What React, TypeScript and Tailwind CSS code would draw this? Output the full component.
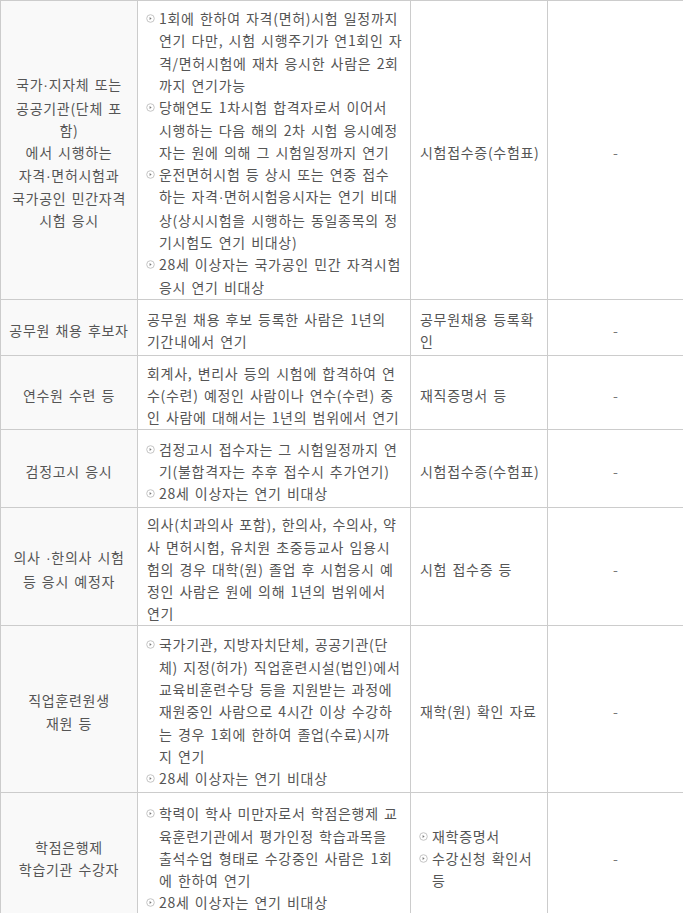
import React from "react";

const Bullet = () => (
  <svg width="9" height="9" viewBox="0 0 9 9" className="shrink-0 mt-[7px] ml-[-1px] mr-[4px]">
    <circle cx="4.5" cy="4.5" r="3.8" fill="#fff" stroke="#c4c4c4" strokeWidth="1" />
    <path d="M3.6 3 L5.6 4.5 L3.6 6 Z" fill="#7a7a7a" />
  </svg>
);

const Txt = ({ s }: { s: string }) => {
  const parts = s.split("·");
  return (
    <>
      {parts.map((p, i) => (
        <React.Fragment key={i}>
          {i > 0 && <span style={{ fontFamily: '"Liberation Sans", sans-serif' }}>·</span>}
          {p}
        </React.Fragment>
      ))}
    </>
  );
};

const Lines = ({ lines }: { lines: string[] }) => (
  <div>
    {lines.map((l, i) => (
      <div key={i} className="whitespace-nowrap">
        <Txt s={l} />
      </div>
    ))}
  </div>
);

const BulletList = ({ items }: { items: string[][] }) => (
  <div>
    {items.map((lines, i) => (
      <div key={i} className="flex">
        <Bullet />
        <Lines lines={lines} />
      </div>
    ))}
  </div>
);

type Row = {
  h: string;
  c1: string[];
  c2: React.ReactNode;
  c3: React.ReactNode;
};

const rows: Row[] = [
  {
    h: "h-[299px]",
    c1: ["국가·지자체 또는", "공공기관(단체 포", "함)", "에서 시행하는", "자격·면허시험과", "국가공인 민간자격", "시험 응시"],
    c2: (
      <BulletList
        items={[
          ["1회에 한하여 자격(면허)시험 일정까지", "연기 다만, 시험 시행주기가 연1회인 자", "격/면허시험에 재차 응시한 사람은 2회", "까지 연기가능"],
          ["당해연도 1차시험 합격자로서 이어서", "시행하는 다음 해의 2차 시험 응시예정", "자는 원에 의해 그 시험일정까지 연기"],
          ["운전면허시험 등 상시 또는 연중 접수", "하는 자격·면허시험응시자는 연기 비대", "상(상시시험을 시행하는 동일종목의 정", "기시험도 연기 비대상)"],
          ["28세 이상자는 국가공인 민간 자격시험", "응시 연기 비대상"],
        ]}
      />
    ),
    c3: <Lines lines={["시험접수증(수험표)"]} />,
  },
  {
    h: "h-[56px]",
    c1: ["공무원 채용 후보자"],
    c2: <Lines lines={["공무원 채용 후보 등록한 사람은 1년의", "기간내에서 연기"]} />,
    c3: <Lines lines={["공무원채용 등록확", "인"]} />,
  },
  {
    h: "h-[74px]",
    c1: ["연수원 수련 등"],
    c2: (
      <Lines
        lines={["회계사, 변리사 등의 시험에 합격하여 연", "수(수련) 예정인 사람이나 연수(수련) 중", "인 사람에 대해서는 1년의 범위에서 연기"]}
      />
    ),
    c3: <Lines lines={["재직증명서 등"]} />,
  },
  {
    h: "h-[78px]",
    c1: ["검정고시 응시"],
    c2: (
      <BulletList
        items={[
          ["검정고시 접수자는 그 시험일정까지 연", "기(불합격자는 추후 접수시 추가연기)"],
          ["28세 이상자는 연기 비대상"],
        ]}
      />
    ),
    c3: <Lines lines={["시험접수증(수험표)"]} />,
  },
  {
    h: "h-[118px]",
    c1: ["의사 ·한의사 시험", "등 응시 예정자"],
    c2: (
      <Lines
        lines={[
          "의사(치과의사 포함), 한의사, 수의사, 약",
          "사 면허시험, 유치원 초중등교사 임용시",
          "험의 경우 대학(원) 졸업 후 시험응시 예",
          "정인 사람은 원에 의해 1년의 범위에서",
          "연기",
        ]}
      />
    ),
    c3: <Lines lines={["시험 접수증 등"]} />,
  },
  {
    h: "h-[167px]",
    c1: ["직업훈련원생", "재원 등"],
    c2: (
      <BulletList
        items={[
          [
            "국가기관, 지방자치단체, 공공기관(단",
            "체) 지정(허가) 직업훈련시설(법인)에서",
            "교육비훈련수당 등을 지원받는 과정에",
            "재원중인 사람으로 4시간 이상 수강하",
            "는 경우 1회에 한하여 졸업(수료)시까",
            "지 연기",
          ],
          ["28세 이상자는 연기 비대상"],
        ]}
      />
    ),
    c3: <Lines lines={["재학(원) 확인 자료"]} />,
  },
  {
    h: "h-[126px]",
    c1: ["학점은행제", "학습기관 수강자"],
    c2: (
      <BulletList
        items={[
          ["학력이 학사 미만자로서 학점은행제 교", "육훈련기관에서 평가인정 학습과목을", "출석수업 형태로 수강중인 사람은 1회", "에 한하여 연기"],
          ["28세 이상자는 연기 비대상"],
        ]}
      />
    ),
    c3: <BulletList items={[["재학증명서"], ["수강신청 확인서", "등"]]} />,
  },
];

export default function App() {
  return (
    <div
      className="w-[683px] h-[913px] overflow-hidden bg-white text-[14px] leading-[22.3px] tracking-[0.7px] [word-spacing:1.5px] text-[#555]"
      style={{ fontFamily: '"Noto Sans CJK KR", "Noto Sans", sans-serif' }}
    >
      <table className="w-[683px] table-fixed border-collapse">
        <colgroup>
          <col className="w-[137px]" />
          <col className="w-[273px]" />
          <col className="w-[137px]" />
          <col className="w-[136px]" />
        </colgroup>
        <tbody>
          {rows.map((r, i) => (
            <tr key={i} className={r.h}>
              <td className="border border-[#cccccc] bg-[#f9f9f9] px-[2px] pt-[5px] pb-0 align-middle text-center">
                <Lines lines={r.c1} />
              </td>
              <td className="border border-[#cccccc] px-[9px] pt-[5px] pb-0 align-middle text-left">{r.c2}</td>
              <td className="border border-[#cccccc] px-[9px] pt-[5px] pb-0 align-middle text-left">{r.c3}</td>
              <td className="border border-[#cccccc] border-r-0 px-[9px] pt-[5px] pb-0 align-middle text-center text-[#777]">
                -
              </td>
            </tr>
          ))}
        </tbody>
      </table>
    </div>
  );
}
